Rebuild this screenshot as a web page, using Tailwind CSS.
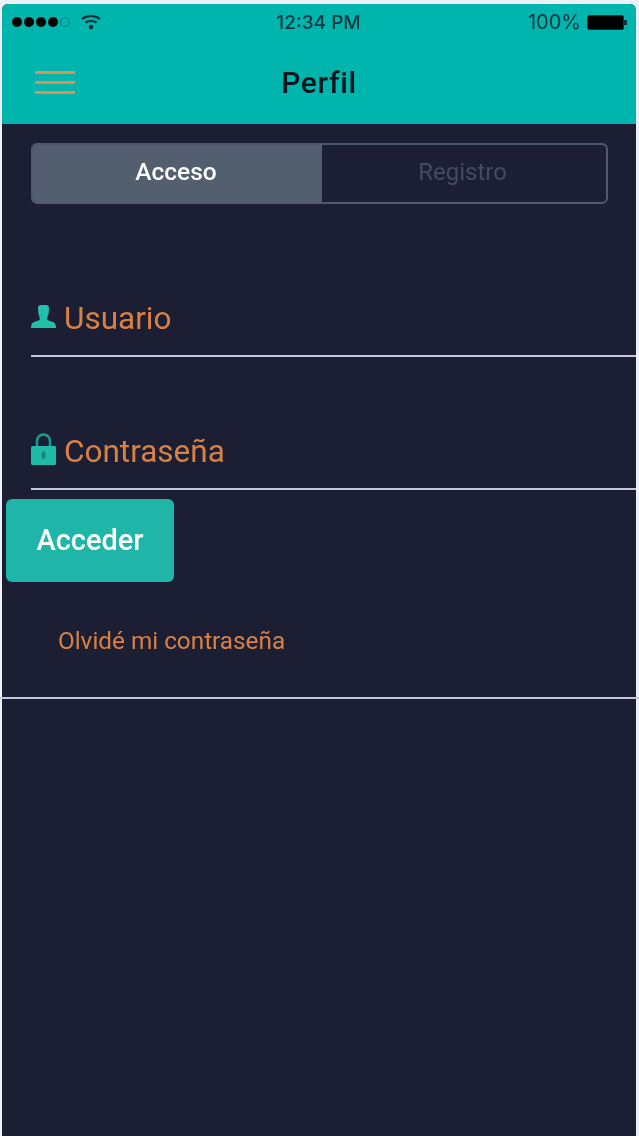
<!DOCTYPE html>
<html lang="es">
<head>
<meta charset="utf-8">
<script src="https://cdn.jsdelivr.net/npm/@tailwindcss/browser@4"></script>
</head>
<body class="bg-[#eef0f7] overflow-hidden">
<div class="w-[639px] h-[1136px] pt-[4px] pl-[2px] pr-[3px] overflow-hidden font-['Roboto',sans-serif] blur-[0.5px]">
  <div class="h-[1132px] bg-[#1c1e33] rounded-t-[6px] flex flex-col">
    <header class="h-[120px] bg-[#00b5ad] rounded-t-[6px] flex flex-col shrink-0">
      <div class="h-[36px] flex items-center justify-between pl-[10px] pr-[9px]">
        <div class="flex items-center gap-[11px] w-[140px]">
          <div class="flex items-center gap-[2px]">
            <span class="w-[10px] h-[10px] rounded-full bg-black"></span>
            <span class="w-[10px] h-[10px] rounded-full bg-black"></span>
            <span class="w-[10px] h-[10px] rounded-full bg-black"></span>
            <span class="w-[10px] h-[10px] rounded-full bg-black"></span>
            <span class="w-[10px] h-[10px] rounded-full border border-[#0b7f85]"></span>
          </div>
          <svg width="20" height="16" viewBox="0 0 20 16" fill="none" stroke="#06282f" stroke-width="2.200"><path d="M1 5 C6 1 14 1 19 5"/><path d="M4.500 8.500 C7.500 6.500 12.500 6.500 15.500 8.500"/><circle cx="10" cy="13" r="2.300" fill="#06282f" stroke="none"/></svg>
        </div>
        <span class="text-[19px] leading-none font-medium text-[#0a3640] font-['Inter',sans-serif] -ml-[2px]">12:34 PM</span>
        <div class="flex items-center justify-end gap-[6px] w-[140px]">
          <span class="text-[20px] leading-none text-[#0a3640] font-['Inter',sans-serif]">100%</span>
          <div class="flex items-center">
            <span class="w-[37px] h-[15px] bg-black rounded-[2px] border border-[#0a3640]"></span>
            <span class="w-[3px] h-[5px] bg-[#0a3640]"></span>
          </div>
        </div>
      </div>
      <div class="flex-1 relative flex items-center justify-center pt-[2px]">
        <div class="absolute left-[33px] top-[31px] w-[40px] flex flex-col gap-[7px]">
          <span class="h-[3px] bg-[#e2904f]"></span>
          <span class="h-[3px] bg-[#e2904f]"></span>
          <span class="h-[3px] bg-[#e2904f]"></span>
        </div>
        <h1 class="text-[30px] leading-none font-medium tracking-[0.6px] text-[#06161c]">Perfil</h1>
      </div>
    </header>
    <main class="flex-1 flex flex-col pt-[19px]">
      <div class="ml-[29px] w-[577px] h-[61px] rounded-[6px] border-2 border-[#4f5a6e] flex overflow-hidden shrink-0">
        <div class="w-[289px] bg-[#535f6e] flex items-center justify-center pb-[3px] pr-[3px] text-[24.500px] font-medium text-white">Acceso</div>
        <div class="flex-1 flex items-center justify-center pb-[3px] pr-[3px] text-[24px] text-[#434b5f]">Registro</div>
      </div>
      <div class="ml-[29px] mt-[87px] h-[66px] flex items-center gap-[8px] border-b-2 border-[#c3c6d4] pb-[9px]">
        <svg width="25" height="23" viewBox="0 0 25 23" fill="#22bfa9" class="-mt-[4px]"><path d="M7 3 Q7 0 10 0 H15 Q18 0 18 3 C18 7 17.500 10 16.500 12 C16 13.500 16 15 17.500 15.500 L22 17 Q25 18 25 23 H0 Q0 18 3 17 L7.500 15.500 C9 15 9 13.500 8.500 12 C7.500 10 7 7 7 3Z"/></svg>
        <span class="text-[31.500px] leading-none text-[#d98143]">Usuario</span>
      </div>
      <div class="ml-[29px] mt-[67px] h-[66px] flex items-center gap-[8px] border-b-2 border-[#c3c6d4] pb-[9px]">
        <svg width="25" height="32" viewBox="0 0 25 32" class="-mt-[6px]"><path d="M6 14 V8 A6.500 6.500 0 0 1 19 8 V14" fill="none" stroke="#1b9c93" stroke-width="2.500"/><rect x="0" y="13" width="25" height="19" rx="1.500" fill="#20bba8"/><ellipse cx="12.500" cy="22" rx="2" ry="4" fill="#14867e"/></svg>
        <span class="text-[31.500px] leading-none text-[#d98143]">Contraseña</span>
      </div>
      <button class="ml-[4px] mt-[9px] w-[168px] h-[83px] rounded-[6px] bg-[#20b5a9] text-[29px] font-medium text-white flex items-center justify-center shrink-0">Acceder</button>
      <p class="ml-[56px] mt-[41px] text-[24.300px] leading-[36px] text-[#d98143]">Olvidé mi contraseña</p>
      <div class="mt-[38px] -ml-[2px] w-[639px] h-[2px] bg-[#c3c6d4] shrink-0"></div>
    </main>
  </div>
</div>
</body>
</html>
